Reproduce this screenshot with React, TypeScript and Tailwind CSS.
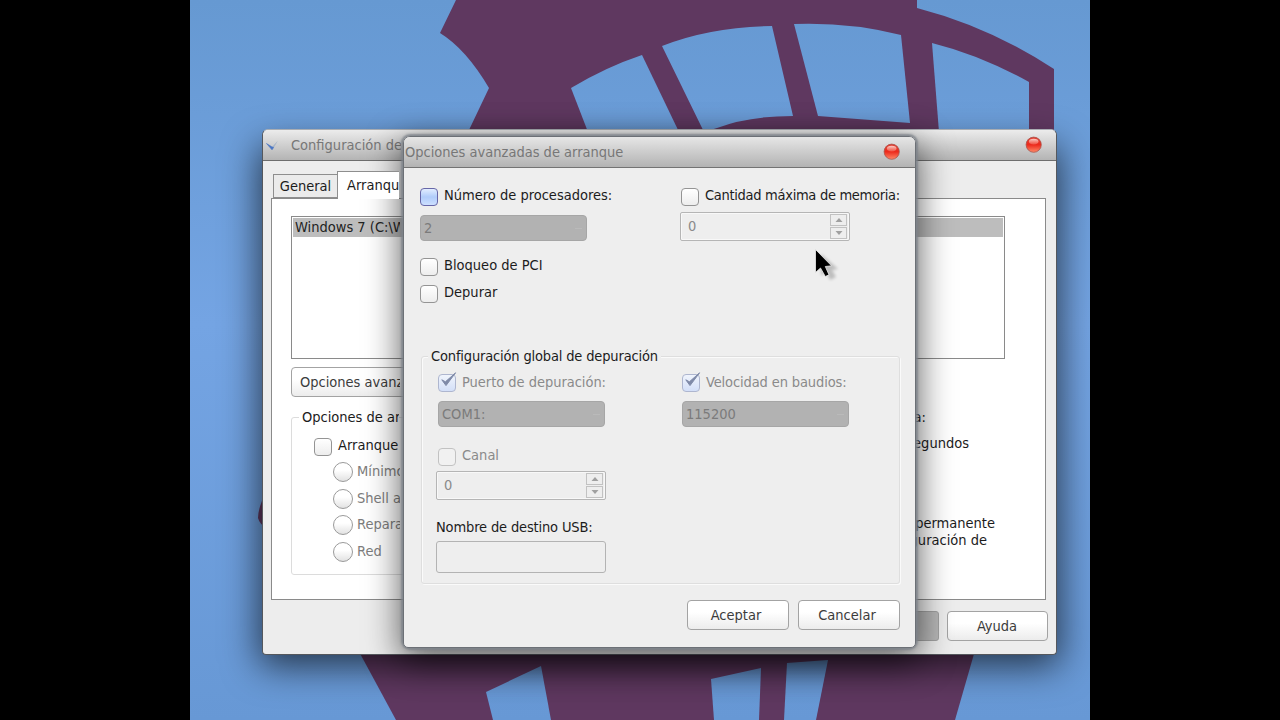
import type { ReactNode } from "react";

function Wallpaper() {
  return (
    <svg className="absolute inset-0 h-full w-full" viewBox="190 0 900 720">
      <defs>
        <linearGradient id="sky" gradientUnits="userSpaceOnUse" x1="0" y1="0" x2="0" y2="720">
          <stop offset="0" stopColor="#6699d2" />
          <stop offset="0.45" stopColor="#74a4e3" />
          <stop offset="1" stopColor="#6798d5" />
        </linearGradient>
      </defs>
      <rect x="190" y="0" width="900" height="720" fill="url(#sky)" />
      <g fill="#5f3860">
        <path d="M456 0 L440 33 Q466 49 489 88 L469 130 L469 200 L1054 200 L1054 69 Q990 27 917 8 L917 0 Z" />
        <path d="M350 635 L396 720 L955 720 L978 640 Z" />
        <path d="M266 492 Q258 508 258 518 Q260 525 266 527 Z" />
      </g>
      <g fill="url(#sky)">
        <path d="M571 88 Q606 67 642 55 L679 132 L588 132 Z" />
        <path d="M662 46 Q710 27 772 26 L793 116 Q748 116 717 128 L704 132 Z" />
        <path d="M794 24 Q850 22 901 35 L910 123 L818 116 Z" />
        <path d="M932 43 Q980 55 1029 82 L1029 132 L939 132 Z" />
        <path d="M486 692 L541 666 L551 720 L493 720 Z" />
        <path d="M711 679 L761 668 L759 720 L714 720 Z" />
        <path d="M787 663 L828 660 L816 720 L784 720 Z" />
      </g>
    </svg>
  );
}

function CloseOrb() {
  return (
    <svg className="size-[18px]" viewBox="0 0 18 18">
      <defs>
        <linearGradient id="orb" x1="0" y1="0" x2="0" y2="1">
          <stop offset="0" stopColor="#e0453a" />
          <stop offset="0.5" stopColor="#ec2a1c" />
          <stop offset="1" stopColor="#ff8a68" />
        </linearGradient>
        <linearGradient id="orbShine" x1="0" y1="0" x2="0" y2="1">
          <stop offset="0" stopColor="#ffe6e0" stopOpacity="0.85" />
          <stop offset="1" stopColor="#ffb0a0" stopOpacity="0.3" />
        </linearGradient>
      </defs>
      <circle cx="8.7" cy="8.7" r="7.6" fill="url(#orb)" stroke="#a8564e" strokeWidth="0.8" />
      <ellipse cx="8.7" cy="5.6" rx="4.8" ry="2.8" fill="url(#orbShine)" />
    </svg>
  );
}

type BoxState = "normal" | "hot" | "dim" | "checked";

function CheckBox({ state = "normal" }: { state?: BoxState }) {
  const look = {
    normal: "border-[#949494] bg-linear-to-b from-white to-[#ededed]",
    hot: "border-[#6767a8] bg-linear-to-b from-[#e2edff] via-[#b0ccfa] to-[#cde0ff]",
    dim: "border-[#c2c2c2] bg-[#f1f1f1]",
    checked: "border-[#aeb6cf] bg-linear-to-b from-[#f0f4fc] to-[#d3dff8]",
  }[state];
  return (
    <span className={`relative block size-[18px] shrink-0 rounded-[4px] border-[1.5px] ${look}`}>
      {state === "checked" && (
        <svg className="absolute -top-[3px] -left-px h-[18px] w-[20px]" viewBox="0 0 20 18">
          <path d="M3.8 7.8 L7.4 9.8 L17.6 0.8 L8 13.6 Z" fill="#7f8aa8" stroke="#7f8aa8" strokeWidth="1" />
        </svg>
      )}
    </span>
  );
}

function Check({ label, state, className = "" }: { label: string; state?: BoxState; className?: string }) {
  const dim = state === "dim" || state === "checked";
  return (
    <label className={`flex h-[18px] items-center gap-[6px] ${className}`}>
      <CheckBox state={state} />
      <span
        className={`whitespace-nowrap ${state === "checked" ? "-mt-[2px]" : "-mt-[4px]"} ${dim ? "text-[#8a8a8a]" : ""}`}
      >
        {label}
      </span>
    </label>
  );
}

function Radio({ label, className = "" }: { label: string; className?: string }) {
  return (
    <label className={`flex h-5 w-[67px] items-center gap-[4px] overflow-hidden text-[#7d7d7d] ${className}`}>
      <span className="block size-5 shrink-0 rounded-full border-[1.5px] border-[#9a9a9a] bg-linear-to-b from-white from-40% to-[#e2e2e2]" />
      <span className="-mt-[2px] whitespace-nowrap">{label}</span>
    </label>
  );
}

function Combo({ value, className = "" }: { value: string; className?: string }) {
  return (
    <div
      className={`flex h-[26px] w-[167px] items-center justify-between rounded-[4px] border border-[#a6a6a6] bg-[#b2b2b2] pr-1 pl-[3px] text-[#7b7b7b] ${className}`}
    >
      <span>{value}</span>
      <span className="h-px w-[7px] bg-[#bababa]" />
    </div>
  );
}

function Step({ down = false }: { down?: boolean }) {
  return (
    <span className="flex h-3 w-[17px] items-center justify-center border border-[#c2c2c2]">
      <svg className="h-1 w-2" viewBox="0 0 8 4">
        <path d={down ? "M0.5 0 H7.5 L4 4 Z" : "M0.5 4 H7.5 L4 0 Z"} fill="#a0a0a0" />
      </svg>
    </span>
  );
}

function Spinner({ className = "" }: { className?: string }) {
  return (
    <div
      className={`flex h-[29px] w-[170px] items-center justify-between rounded-[2px] border border-[#b5b5b5] pr-[2px] pl-[7px] text-[#8a8a8a] shadow-[inset_0_0_0_1px_#f8f8f8] ${className}`}
    >
      <span className="-mt-px">0</span>
      <span className="flex flex-col gap-px">
        <Step />
        <Step down />
      </span>
    </div>
  );
}

function Button({ children, className = "" }: { children: ReactNode; className?: string }) {
  return (
    <button
      className={`flex h-[30px] items-center rounded-[4px] border-[1.5px] border-[#a3a3a3] bg-linear-to-b from-white from-40% to-[#ececec] whitespace-nowrap text-[#3c3c3c] ${className}`}
    >
      {children}
    </button>
  );
}

function SystemWindow() {
  return (
    <section className="absolute top-[129px] left-[72px] flex h-[526px] w-[795px] flex-col overflow-hidden rounded-t-[6px] rounded-b-[4px] border border-[#55585d] border-t-[#a9adb3] bg-[#ededed]">
      <header className="flex h-[31px] shrink-0 items-center justify-between border-b border-[#6e6e6e] bg-linear-to-b from-[#ececec] to-[#b4b4b4] pr-[13px] text-[#777]">
        <span className="flex w-[138px] items-center overflow-hidden whitespace-nowrap">
          <svg className="mt-px ml-[3px] h-3 w-3 shrink-0" viewBox="0 0 12 12">
            <path d="M6 7 L12 0.6 L6.6 9.8 Z" fill="#a9b6c8" />
            <path d="M0.5 3.5 L5.8 6.8 L7.6 7.4 L6 9.8 Z" fill="#4a76c4" stroke="#4a76c4" strokeWidth="0.6" />
          </svg>
          <span className="ml-[13px]">Configuración del sistema</span>
        </span>
        <CloseOrb />
      </header>
      <div className="flex flex-1 flex-col pt-[10px] pl-2">
        <nav className="z-10 flex h-7 w-[128px] items-end overflow-hidden pl-[2px]">
          <span className="mb-px flex h-[24px] w-[64px] shrink-0 items-center justify-center border border-r-0 border-[#8e8e8e] bg-[#ebebeb]">General</span>
          <span className="flex h-7 w-[88px] shrink-0 items-center border border-r-0 border-b-0 border-[#8e8e8e] bg-white pb-[2px] pl-[9px]">Arranque</span>
        </nav>
        <div className="-mt-px flex h-[402px] w-[775px] flex-col border border-[#8a8a8a] bg-white pt-[17px] pl-[19px]">
          <div className="h-[143px] w-[714px] shrink-0 border border-[#8a8a8a] p-px">
            <div className="h-[19px] bg-[#bdbdbd] pl-[2px] text-[#222]">
              <span className="block w-[105px] overflow-hidden leading-[18px] whitespace-nowrap">Windows 7 (C:\Windows)</span>
            </div>
          </div>
          <div className="mt-[8px]">
            <Button className="w-[190px] pl-[8px]">
              <span className="w-[100px] overflow-hidden text-left">Opciones avanzadas...</span>
            </Button>
          </div>
          <div className="mt-[20px] flex">
            <fieldset className="h-[158px] w-[380px] rounded-[3px] border border-[#dcdcdc]">
              <div className="-mt-[11px] ml-[7px] h-5 w-[100px] overflow-hidden bg-white px-[3px] leading-5 whitespace-nowrap">Opciones de arranque</div>
              <Check label="Arranque a prueba de errores" className="mt-[11px] ml-[22px] w-[86px] overflow-hidden" />
              <Radio label="Mínimo" className="mt-[6px] ml-[41px]" />
              <Radio label="Shell alterno" className="mt-[7px] ml-[41px]" />
              <Radio label="Reparación" className="mt-[6px] ml-[41px]" />
              <Radio label="Red" className="mt-[7px] ml-[41px]" />
            </fieldset>
            <div className="flex w-[324px] flex-col items-end leading-[17px]">
              <p className="-mt-[8px] mr-[69px] flex w-[10px] justify-end overflow-hidden whitespace-nowrap">Tiempo de espera:</p>
              <p className="mt-[9px] mr-[26px] flex w-[55px] justify-end overflow-hidden whitespace-nowrap">30 segundos</p>
              <p className="mt-[63px] flex w-[79px] justify-end overflow-hidden whitespace-nowrap">Convertir en permanente</p>
              <p className="mr-[8px] flex w-[71px] justify-end overflow-hidden whitespace-nowrap">toda la configuración de</p>
            </div>
          </div>
        </div>
        <footer className="mt-[11px] flex justify-end gap-2 pr-[8px]">
          <span className="h-[30px] w-[101px] rounded-[3px] border border-[#a2a2a2] bg-[#b8b8b8]" />
          <Button className="w-[101px] justify-center pr-px">Ayuda</Button>
        </footer>
      </div>
    </section>
  );
}

function AdvancedDialog() {
  return (
    <section className="absolute top-[136px] left-[213px] flex h-[512px] w-[513px] flex-col overflow-hidden rounded-t-[7px] rounded-b-[5px] border border-[#6c7076] bg-[#eee]">
      <header className="flex h-[31px] shrink-0 items-center justify-between border-b border-[#737373] bg-linear-to-b from-[#e6e6e6] to-[#b3b3b3] pr-[14px] pl-px text-[#777]">
        <span>Opciones avanzadas de arranque</span>
        <CloseOrb />
      </header>
      <div className="flex flex-col pt-5 pr-[15px] pl-[16px]">
        <div className="flex h-[54px]">
          <div className="w-[261px] shrink-0">
            <Check label="Número de procesadores:" state="hot" />
            <Combo value="2" className="mt-[9px]" />
          </div>
          <div className="shrink-0">
            <Check label="Cantidad máxima de memoria:" className="tracking-[-0.3px]" />
            <Spinner className="-ml-px mt-[6px]" />
          </div>
        </div>
        <Check label="Bloqueo de PCI" className="mt-[16px]" />
        <Check label="Depurar" className="mt-[9px]" />
        <fieldset className="mt-[53px] ml-px h-[228px] w-[479px] rounded-[3px] border border-[#dedede] shadow-[1px_1px_0_#fafafa,inset_1px_1px_0_#fafafa]">
          <div className="-mt-[11px] ml-[6px] h-5 w-fit bg-[#eee] px-[3px] leading-5 tracking-[-0.16px]">Configuración global de depuración</div>
          <div className="mt-[8px] ml-[16px] flex">
            <div className="w-[244px]">
              <Check label="Puerto de depuración:" state="checked" className="tracking-[-0.03px]" />
              <Combo value="COM1:" className="mt-[9px]" />
            </div>
            <div>
              <Check label="Velocidad en baudios:" state="checked" className="tracking-[-0.12px]" />
              <Combo value="115200" className="mt-[9px]" />
            </div>
          </div>
          <Check label="Canal" state="dim" className="mt-[21px] ml-[16px]" />
          <Spinner className="mt-[5px] ml-[14px]" />
          <div className="mt-[17px] ml-[14px] h-5 leading-5 tracking-[-0.15px]">Nombre de destino USB:</div>
          <div className="mt-[4px] ml-[14px] h-8 w-[170px] rounded-[3px] border-[1.5px] border-[#b3b3b3]" />
        </fieldset>
        <footer className="mt-[16px] flex justify-end gap-[9px]">
          <Button className="w-[102px] justify-center pr-[4px]">Aceptar</Button>
          <Button className="w-[102px] justify-center pr-[4px]">Cancelar</Button>
        </footer>
      </div>
    </section>
  );
}

export default function App() {
  return (
    <main className="flex h-[720px] w-[1280px] justify-center bg-black font-['DejaVu_Sans_Condensed','DejaVu_Sans',sans-serif] text-[14.5px] leading-[18px] text-[#1c1c1c] select-none">
      <div className="relative h-full w-[900px] overflow-hidden">
        <Wallpaper />
        <div className="absolute top-[139px] left-[72px] h-[514px] w-[795px] rounded-[6px] shadow-[0_10px_36px_3px_rgba(0,0,0,0.65)]" />
        <SystemWindow />
        <div className="absolute top-[136px] left-[213px] h-[512px] w-[513px] rounded-[7px] shadow-[0_0_2px_2px_rgba(125,130,138,0.85),0_10px_34px_3px_rgba(0,0,0,0.6)]" />
        <AdvancedDialog />
        <svg className="absolute top-[249px] left-[625px] h-[34px] w-[26px]" viewBox="0 0 26 34">
          <path d="M3 5 L3 27 L8 23 L12 31 L18 28 L14 21 L20 20 Z" fill="#000" opacity="0.2" transform="translate(3 0)" className="blur-[1.5px]" />
          <path d="M0.5 0.5 L0.5 23.5 L5.5 19 L10.3 27.5 L14 25.8 L10.3 17.5 L16.5 16.8 Z" fill="#000" stroke="#eee" strokeWidth="0.8" />
        </svg>
      </div>
    </main>
  );
}
